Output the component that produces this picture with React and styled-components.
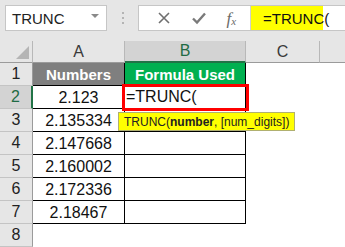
import React from 'react';
import styled, { createGlobalStyle } from 'styled-components';

const GlobalStyle = createGlobalStyle`
  html, body {
    margin: 0;
    padding: 0;
    background: #ffffff;
    font-family: "Liberation Sans", Arial, sans-serif;
  }
  * { box-sizing: border-box; }
`;

const numbers = ['2.123', '2.135334', '2.147668', '2.160002', '2.172336', '2.18467'];

const FormulaIcons = () => (
  <IconStrip>
    <svg width="14" height="14" viewBox="0 0 14 14">
      <path d="M2 2 L12 12 M12 2 L2 12" stroke="#6f6f6f" strokeWidth="1.6" fill="none" />
    </svg>
    <svg width="16" height="14" viewBox="0 0 16 14">
      <path d="M2 7.5 L6 11.5 L14 2.5" stroke="#7a7a7a" strokeWidth="2.4" fill="none" />
    </svg>
    <Fx>
      f<sub>x</sub>
    </Fx>
  </IconStrip>
);

export default function App() {
  return (
    <Page>
      <GlobalStyle />
      <Toolbar>
        <NameBox>
          <span>TRUNC</span>
          <Caret />
        </NameBox>
        <Grip>
          <i />
          <i />
          <i />
        </Grip>
        <FormulaBar>
          <FormulaIcons />
          <FormulaInput>
            <Highlight>=TRUNC(</Highlight>
          </FormulaInput>
        </FormulaBar>
      </Toolbar>

      <Sheet>
        <Corner />
        <ColHead>A</ColHead>
        <ColHead $active>B</ColHead>
        <ColHead>C</ColHead>
        <ColHead $last />

        <RowHead>1</RowHead>
        <HeadCell $bg="#7f7f7f">Numbers</HeadCell>
        <HeadCell $bg="#00b050">Formula Used</HeadCell>
        <Blank />
        <Blank />

        {numbers.map((n, i) => (
          <React.Fragment key={n}>
            <RowHead $active={i === 0}>{i + 2}</RowHead>
            <DataCell>{n}</DataCell>
            {i === 0 ? (
              <EditCell>
                =TRUNC(
                <RedBox />
                <Tip>
                  TRUNC(<b>number</b>, [num_digits])
                </Tip>
              </EditCell>
            ) : (
              <DataCell />
            )}
            <Blank />
            <Blank />
          </React.Fragment>
        ))}

        <RowHead>8</RowHead>
        <Blank />
        <Blank />
        <Blank />
        <Blank />
      </Sheet>
    </Page>
  );
}

const Page = styled.div`
  width: 345px;
  height: 247px;
  overflow: hidden;
  background: #ffffff;
`;

const Toolbar = styled.div`
  height: 41px;
  background: #e6e6e6;
  display: flex;
  align-items: flex-start;
  padding: 5px 0 0 5px;
`;

const NameBox = styled.div`
  width: 102px;
  height: 26px;
  background: #ffffff;
  border: 1px solid #c6c6c6;
  display: flex;
  align-items: center;
  justify-content: space-between;
  padding: 0 7px 0 6px;
  font-size: 15px;
  color: #222;
`;

const Caret = styled.span`
  width: 0;
  height: 0;
  border-left: 4px solid transparent;
  border-right: 4px solid transparent;
  border-top: 4px solid #8a8a8a;
  margin-bottom: 4px;
`;

const Grip = styled.div`
  width: 31px;
  height: 26px;
  display: flex;
  flex-direction: column;
  align-items: center;
  justify-content: center;
  gap: 3px;

  i {
    display: block;
    width: 2px;
    height: 2px;
    background: #b4b4b4;
  }
`;

const FormulaBar = styled.div`
  flex: 1;
  height: 26px;
  display: flex;
  background: #ffffff;
  border: 1px solid #c6c6c6;
  border-right: none;
`;

const IconStrip = styled.div`
  width: 112px;
  display: flex;
  align-items: center;
  justify-content: space-around;
  padding: 0 4px 0 8px;
  border-right: 1px solid #d0d0d0;
`;

const Fx = styled.span`
  font-family: "Liberation Serif", "Times New Roman", serif;
  font-style: italic;
  font-size: 17px;
  color: #6a6a6a;
  line-height: 1;
  sub {
    font-size: 11px;
    vertical-align: -1px;
  }
`;

const FormulaInput = styled.div`
  flex: 1;
  display: flex;
`;

const Highlight = styled.div`
  background: #ffff00;
  width: 72px;
  display: flex;
  align-items: center;
  padding-left: 12px;
  font-size: 15px;
  color: #111;
`;

const Sheet = styled.div`
  display: grid;
  grid-template-columns: 33px 92px 121px 74px 1fr;
  grid-template-rows: 22px repeat(8, 23px);
  font-size: 16px;
  color: #111;
`;

const Corner = styled.div`
  background: #e6e6e6;
  border-right: 1px solid #b8b8b8;
  border-bottom: 1px solid #9b9b9b;
  position: relative;
  &::after {
    content: '';
    position: absolute;
    right: 3px;
    bottom: 3px;
    border-left: 13px solid transparent;
    border-bottom: 13px solid #b5b5b5;
  }
`;

const ColHead = styled.div`
  background: ${(p) => (p.$active ? '#d3d3d3' : '#e6e6e6')};
  color: ${(p) => (p.$active ? '#1f6b44' : '#3a3a3a')};
  border-right: ${(p) => (p.$last ? 'none' : '1px solid #b8b8b8')};
  border-bottom: ${(p) => (p.$active ? '2px solid #217346' : '1px solid #9b9b9b')};
  display: flex;
  align-items: center;
  justify-content: center;
  font-size: 16px;
`;

const RowHead = styled.div`
  background: ${(p) => (p.$active ? '#d3d3d3' : '#e6e6e6')};
  color: ${(p) => (p.$active ? '#1f6b44' : '#222')};
  border-bottom: 1px solid #c4c4c4;
  border-right: ${(p) => (p.$active ? '2px solid #217346' : '1px solid #9b9b9b')};
  display: flex;
  align-items: center;
  justify-content: center;
  font-size: 16px;
`;

const HeadCell = styled.div`
  background: ${(p) => p.$bg};
  color: #ffffff;
  font-weight: bold;
  font-size: 15px;
  display: flex;
  align-items: center;
  justify-content: center;
  border-right: 1px solid #000;
  border-bottom: 1px solid #000;
`;

const DataCell = styled.div`
  display: flex;
  align-items: center;
  justify-content: center;
  border-right: 1px solid #000;
  border-bottom: 1px solid #000;
  font-size: 16px;
  padding-top: 1px;
`;

const EditCell = styled.div`
  position: relative;
  display: flex;
  align-items: center;
  padding-left: 1px;
  border-right: 1px solid #000;
  border-bottom: 1px solid #000;
  font-size: 16px;
`;

const RedBox = styled.div`
  position: absolute;
  left: -3px;
  top: -2px;
  width: 127px;
  height: 27px;
  border: 3px solid #ff0000;
`;

const Tip = styled.div`
  position: absolute;
  left: -7px;
  top: 26px;
  height: 19px;
  padding: 0 5px 0 5px;
  white-space: nowrap;
  display: flex;
  align-items: center;
  background: #ffff00;
  border: 1px solid #b0b070;
  font-size: 12px;
  color: #222;
  z-index: 2;
  b {
    font-weight: bold;
  }
`;

const Blank = styled.div`
  background: #ffffff;
`;
